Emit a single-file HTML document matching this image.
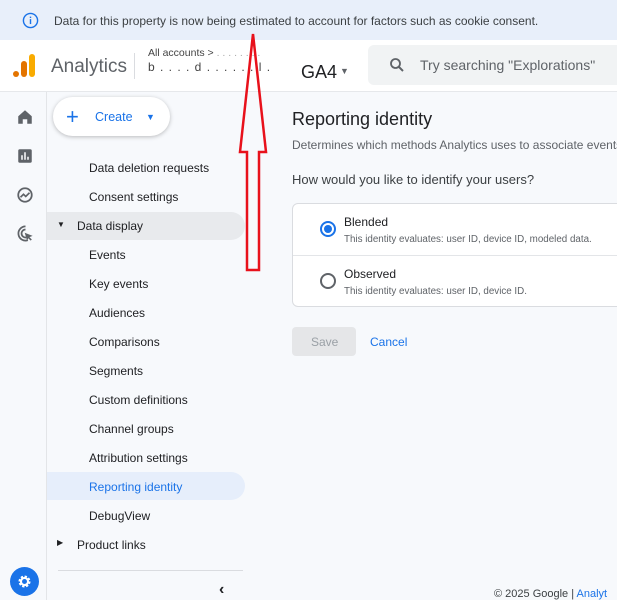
<!DOCTYPE html>
<html><head><style>
*{margin:0;padding:0;box-sizing:border-box}
body{width:617px;height:600px;overflow:hidden;background:#f7f9fc;font-family:"Liberation Sans",Arial,sans-serif;position:relative;color:#202124}
.abs{position:absolute}
.banner{left:0;top:0;width:617px;height:40px;background:#e8effa;font-size:12px;color:#3c4043}
.header{left:0;top:40px;width:617px;height:52px;background:#fff;border-bottom:1px solid #e6e8eb}
.rail{left:0;top:92px;width:47px;height:508px;border-right:1px solid #e3e5e8;background:#f7f9fc}
.nav{font-size:12px;color:#202124;position:absolute;left:89px}
.sel{left:47px;width:198px;height:28px;border-radius:0 14px 14px 0}
</style></head><body>
<div class="abs banner">
<svg class="abs" style="left:22px;top:12px" width="17" height="17" viewBox="0 0 24 24"><circle cx="12" cy="12" r="10" fill="none" stroke="#1a73e8" stroke-width="2"/><rect x="11" y="10" width="2" height="7" fill="#1a73e8"/><rect x="11" y="6.5" width="2" height="2" fill="#1a73e8"/></svg>
<span class="abs" style="left:54px;top:14px">Data for this property is now being estimated to account for factors such as cookie consent.</span>
</div>
<div class="abs header">
<div class="abs" style="left:13px;top:31px;width:6px;height:6px;border-radius:3px;background:#e37400"></div>
<div class="abs" style="left:21px;top:21px;width:6px;height:16px;border-radius:3px;background:#e37400"></div>
<div class="abs" style="left:29px;top:14px;width:6px;height:23px;border-radius:3px;background:#f9ab00"></div>
<span class="abs" style="left:51px;top:16px;font-size:19px;color:#5f6368">Analytics</span>
<div class="abs" style="left:134px;top:13px;width:1px;height:26px;background:#dadce0"></div>
<span class="abs" style="left:148px;top:7px;font-size:10.5px;color:#444">All accounts &gt; <span style="color:#aaa">. . . . . . . .</span></span>
<span class="abs" style="left:148px;top:20px;font-size:12px;color:#444;letter-spacing:1px">b . . . . d . . . . . . l .</span>
<span class="abs" style="left:301px;top:22px;font-size:18px;color:#202124">GA4</span>
<span class="abs" style="left:340px;top:26px;font-size:9px;color:#5f6368">▼</span>
<div class="abs" style="left:368px;top:5px;width:260px;height:40px;background:#f1f3f4;border-radius:6px"></div>
<svg class="abs" style="left:388px;top:16px" width="18" height="18" viewBox="0 0 24 24"><circle cx="10" cy="10" r="6" fill="none" stroke="#5f6368" stroke-width="2.4"/><path d="M14.5 14.5L20 20" stroke="#5f6368" stroke-width="2.6"/></svg>
<span class="abs" style="left:420px;top:17px;font-size:14px;color:#5f6368">Try searching "Explorations"</span>
</div>
<div class="abs rail"></div>
<svg class="abs" style="left:16px;top:108px" width="18" height="18" viewBox="0 0 24 24"><path d="M3 11L12 3l9 8v10h-6v-6h-6v6H3z" fill="#5f6368"/></svg>
<svg class="abs" style="left:16px;top:147px" width="18" height="18" viewBox="0 0 24 24"><rect x="3" y="3" width="18" height="18" rx="2" fill="#5f6368"/><rect x="7" y="11" width="2" height="6" fill="#fff"/><rect x="11" y="7" width="2" height="10" fill="#fff"/><rect x="15" y="13" width="2" height="4" fill="#fff"/></svg>
<svg class="abs" style="left:16px;top:186px" width="18" height="18" viewBox="0 0 24 24"><circle cx="12" cy="12" r="9" fill="none" stroke="#5f6368" stroke-width="2.4"/><path d="M6 15l4-4 3 3 5-5" fill="none" stroke="#5f6368" stroke-width="2.2"/></svg>
<svg class="abs" style="left:16px;top:224px" width="19" height="19" viewBox="0 0 24 24"><path d="M12 3a9 9 0 1 0 3 17.5M12 7a5 5 0 1 0 1 9.9" fill="none" stroke="#5f6368" stroke-width="2.2"/><path d="M11 11l10 4-4 1.5 3 3-1.5 1.5-3-3L14 21z" fill="#5f6368"/></svg>
<div class="abs" style="left:10px;top:567px;width:29px;height:29px;border-radius:15px;background:#1a73e8"></div>
<svg class="abs" style="left:16px;top:573px" width="17" height="17" viewBox="0 0 24 24"><circle cx="12" cy="12" r="6.5" fill="none" stroke="#fff" stroke-width="4" stroke-dasharray="3 2.1"/><circle cx="12" cy="12" r="5" fill="none" stroke="#fff" stroke-width="3"/></svg>
<div class="abs" style="left:53px;top:97px;width:117px;height:39px;border-radius:20px;background:#fff;box-shadow:0 1px 4px rgba(0,0,0,.25)"></div>
<span class="abs" style="left:66px;top:104px;font-size:22px;color:#1a73e8;font-weight:300">+</span>
<span class="abs" style="left:95px;top:110px;font-size:12.5px;color:#1a73e8">Create</span>
<span class="abs" style="left:146px;top:112px;font-size:9px;color:#1a73e8">▼</span>
<div class="abs sel" style="top:212px;background:#e8eaed"></div>
<div class="abs sel" style="top:472px;background:#e6eefb"></div>
<span class="nav" style="top:161px">Data deletion requests</span>
<span class="nav" style="top:190px">Consent settings</span>
<span class="abs" style="left:57px;top:220px;font-size:8px">▼</span>
<span class="nav" style="left:77px;top:219px">Data display</span>
<span class="nav" style="top:248px">Events</span>
<span class="nav" style="top:277px">Key events</span>
<span class="nav" style="top:306px">Audiences</span>
<span class="nav" style="top:335px">Comparisons</span>
<span class="nav" style="top:364px">Segments</span>
<span class="nav" style="top:393px">Custom definitions</span>
<span class="nav" style="top:422px">Channel groups</span>
<span class="nav" style="top:451px">Attribution settings</span>
<span class="nav" style="top:480px;color:#1a73e8">Reporting identity</span>
<span class="nav" style="top:509px">DebugView</span>
<span class="abs" style="left:57px;top:538px;font-size:8px">▶</span>
<span class="nav" style="left:77px;top:538px">Product links</span>
<div class="abs" style="left:58px;top:570px;width:185px;height:1px;background:#dadce0"></div>
<span class="abs" style="left:219px;top:581px;font-size:16px;font-weight:bold">‹</span>
<span class="abs" style="left:292px;top:109px;font-size:18px;color:#202124">Reporting identity</span>
<span class="abs" style="left:292px;top:138px;font-size:12px;color:#5f6368;white-space:nowrap">Determines which methods Analytics uses to associate events w</span>
<span class="abs" style="left:292px;top:172px;font-size:13px;color:#3c4043">How would you like to identify your users?</span>
<div class="abs" style="left:292px;top:203px;width:340px;height:104px;background:#fff;border:1px solid #dadce0;border-radius:6px"></div>
<div class="abs" style="left:293px;top:255px;width:330px;height:1px;background:#e3e5e8"></div>
<div class="abs" style="left:320px;top:221px;width:16px;height:16px;border-radius:8px;border:2px solid #1a73e8"></div>
<div class="abs" style="left:324px;top:225px;width:8px;height:8px;border-radius:4px;background:#1a73e8"></div>
<div class="abs" style="left:320px;top:273px;width:16px;height:16px;border-radius:8px;border:2px solid #5f6368"></div>
<span class="abs" style="left:344px;top:215px;font-size:12px">Blended</span>
<span class="abs" style="left:344px;top:234px;font-size:9.8px;color:#5f6368">This identity evaluates: user ID, device ID, modeled data.</span>
<span class="abs" style="left:344px;top:267px;font-size:12px">Observed</span>
<span class="abs" style="left:344px;top:286px;font-size:9.8px;color:#5f6368">This identity evaluates: user ID, device ID.</span>
<div class="abs" style="left:292px;top:327px;width:64px;height:29px;background:#e5e6e8;border-radius:4px"></div>
<span class="abs" style="left:311px;top:335px;font-size:12px;color:#9aa0a6">Save</span>
<span class="abs" style="left:370px;top:335px;font-size:12px;color:#1a73e8">Cancel</span>
<span class="abs" style="left:494px;top:588px;font-size:11px;color:#3c4043;white-space:nowrap">© 2025 Google | <span style="color:#1a73e8">Analyt</span></span>
<svg class="abs" style="left:0;top:0" width="617" height="600"><path d="M253 34L266 152L259 152L259 270L247 270L247 152L240 152Z" fill="none" stroke="#e8111b" stroke-width="2.5"/></svg>
</body></html>
